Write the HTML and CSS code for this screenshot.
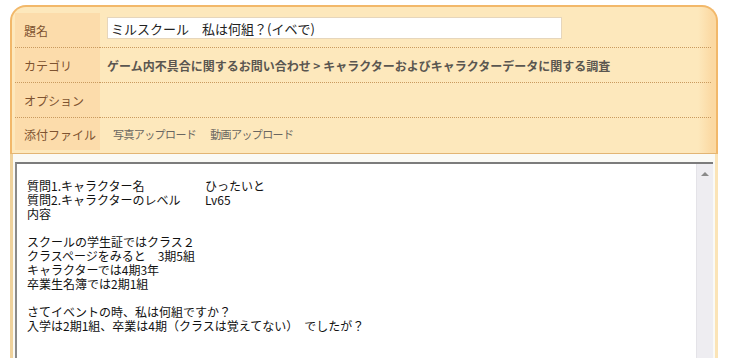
FILE: index.html
```html
<!DOCTYPE html>
<html lang="ja">

<head>
    <meta charset="UTF-8">
    <title>お問い合わせ</title>
    <link rel="stylesheet" href="styles.css">
</head>

<body>

    <div class="form-panel">
        <table class="form-table">
            <tr>
                <th>題名</th>
                <td><input class="title-input" type="text" value="ミルスクール　私は何組？(イベで)"></td>
            </tr>
            <tr>
                <th>カテゴリ</th>
                <td class="category">ゲーム内不具合に関するお問い合わせ &gt; キャラクターおよびキャラクターデータに関する調査</td>
            </tr>
            <tr>
                <th>オプション</th>
                <td></td>
            </tr>
            <tr>
                <th>添付ファイル</th>
                <td class="uploads"><span>写真アップロード</span><span>動画アップロード</span></td>
            </tr>
        </table>
    </div>

    <!-- 本文 -->
    <div class="body-frame">
        <div class="body-box">
            <div class="body-text">
                <div class="line"><span class="col">質問1.キャラクター名</span>ひったいと</div>
                <div class="line"><span class="col">質問2.キャラクターのレベル</span>Lv65</div>
                <div class="line">内容</div>
                <div class="line">&nbsp;</div>
                <div class="line">スクールの学生証ではクラス２</div>
                <div class="line">クラスページをみると　3期5組</div>
                <div class="line">キャラクターでは4期3年</div>
                <div class="line">卒業生名簿では2期1組</div>
                <div class="line">&nbsp;</div>
                <div class="line">さてイベントの時、私は何組ですか？</div>
                <div class="line">入学は2期1組、卒業は4期（クラスは覚えてない）　でしたが？</div>
            </div>
            <div class="scrollbar"><span class="arrow"></span></div>
        </div>
    </div>

</body>

</html>
```

FILE: styles.css
```css
body {
    margin: 0;
    background: #ffffff;
    font-family: "Noto Sans CJK JP", "Noto Sans", sans-serif;
}

.form-panel {
    box-sizing: border-box;
    width: 708px;
    height: 149px;
    margin: 5px 0 0 10px;
    padding: 6px 0 0 3px;
    border: 2px solid #f2b86a;
    border-bottom: 1px solid #e2b574;
    border-radius: 16px 16px 0 0;
    background: linear-gradient(to right, #fde8bc 0, #fde8bc 686px, #fbd9a3 700px);
}

.form-table {
    width: 696px;
    border-collapse: collapse;
}

.form-table th,
.form-table td {
    height: 34px;
    padding: 0;
    border-bottom: 1px dotted #c99a5e;
    vertical-align: middle;
}

.form-table tr:last-child th,
.form-table tr:last-child td {
    height: 32px;
    border-bottom: none;
}

.form-table th {
    width: 76px;
    padding-left: 9px;
    text-align: left;
    font-size: 12px;
    font-weight: normal;
    color: #7e5330;
    background: #fcdcab;
}

.title-input {
    display: block;
    box-sizing: border-box;
    width: 455px;
    height: 22px;
    margin: 0 0 4px 7px;
    padding: 0 3px;
    border: 1px solid #e6d6bc;
    background: #ffffff;
    font-family: inherit;
    font-size: 13px;
    color: #222;
}

.category {
    padding-left: 7px !important;
    font-size: 12px;
    font-weight: bold;
    color: #5a5650;
}

.uploads {
    padding-left: 13px !important;
    font-size: 11px;
    letter-spacing: -0.6px;
    color: #6a6660;
}

.uploads span {
    margin-right: 14px;
}

.body-frame {
    box-sizing: border-box;
    width: 708px;
    height: 205px;
    margin-left: 10px;
    padding: 8px 2px 0 2px;
    border-left: 3px solid #efd29c;
    border-right: 3px solid #fbe4b7;
    background: #fafaf6;
}

.body-box {
    display: flex;
    height: 100%;
    border-top: 2px solid #7c7c7c;
    border-left: 2px solid #8a8a8a;
    background: #ffffff;
}

.body-text {
    flex: 1;
    padding: 15px 0 0 10px;
    font-size: 12px;
    color: #111;
}

.line {
    height: 14px;
    line-height: 14px;
}

.col {
    display: inline-block;
    width: 178px;
}

.scrollbar {
    width: 16px;
    background: #eeedf1;
    border-left: 1px solid #e4e3e8;
}

.arrow {
    display: block;
    width: 0;
    height: 0;
    margin: 8px auto 0;
    border-left: 4px solid transparent;
    border-right: 4px solid transparent;
    border-bottom: 4px solid #8a8a8a;
}
```
